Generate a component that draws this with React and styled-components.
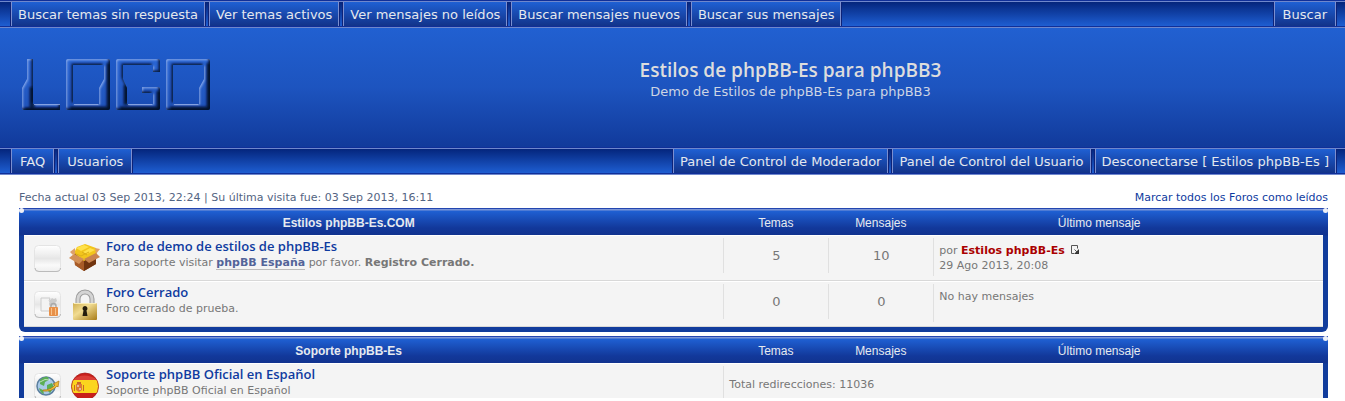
import styled, { createGlobalStyle } from 'styled-components';

const GlobalStyle = createGlobalStyle`
	* {
		box-sizing: border-box;
	}
	body {
		margin: 0;
		background: #fff;
		color: #777;
		font-family: "DejaVu Sans", Verdana, sans-serif;
		font-size: 11px;
		line-height: 15px;
	}
	a {
		color: #0f3ba0;
		text-decoration: none;
	}
`;

const SPage = styled.div`
	height: calc(100vh - 3px);
	overflow: hidden;
`;

const SBar = styled.nav`
	display: flex;
	justify-content: space-between;
	padding: 0 9px 0 11px;
	height: 28px;
	border-bottom: 1px solid #6f87cc;
	border-top: 1px solid #102f98;
	background: linear-gradient(#6f87cc 1px, #04257c 1px, #1e5ed2 25px, #102f98 25px);
`;

const SBarGroup = styled.div`
	display: flex;
	gap: 4px;
	padding: 1px 0;
`;

const SBarLink = styled.a`
	height: 24px;
	padding: 0 ${({ $tight }) => ($tight ? '6px' : '8px')};
	border: solid #7b8fd0;
	border-width: 0 1px;
	box-shadow: -1px 0 #0c2278, 1px 0 #0c2278;
	background: linear-gradient(#1f60d3, #12338a);
	color: #e4e8ee;
	font-size: 13px;
	line-height: 26px;
	white-space: nowrap;
`;

const SHeader = styled.header`
	display: flex;
	height: 119px;
	background: linear-gradient(#2160d1, #1d54bf 50%, #113a9b);
`;

const SLogo = styled.a`
	flex: 0 0 236px;
	padding: 29px 0 0 20px;
`;

const STitles = styled.div`
	flex: 1;
	padding-top: 29px;
	color: #cdd5e4;
	font-size: 13px;
	text-align: center;
`;

const STitle = styled.h1`
	margin: 0;
	color: #ddd;
	font: 600 19px/27px "Open Sans", sans-serif;
`;

const SSubtitle = styled.p`
	margin: 0;
	line-height: 16px;
`;

const SMain = styled.main`
	padding: 15px 17px 0 19px;
`;

const SInfo = styled.div`
	display: flex;
	justify-content: space-between;
	height: 18px;
	color: #536482;
`;

const SPanel = styled.section`
	position: relative;
	margin-bottom: 4px;
	padding: 0 5px 5px;
	border-radius: 0 0 6px 6px;
	background: linear-gradient(
		#2245b0 1px,
		#7d96d6 1px,
		#7d96d6 2px,
		#1f60d3 3px,
		#12389a 20px,
		#11338f 27px,
		#113c9c 28px
	);
`;

const SCorner = styled.span`
	position: absolute;
	top: 0;
	${({ $side }) => $side}: 0;
	width: 5px;
	height: 5px;
	border-radius: 50%;
	background: #eef0f6;
`;

const STable = styled.table`
	width: 100%;
	border-spacing: 0;
	table-layout: fixed;
`;

const STh = styled.th`
	width: ${({ $width }) => $width};
	height: 27px;
	padding: 3px ${({ $trail }) => $trail || '0'} 0 0;
	color: #e6eaf0;
	font: ${({ $bold }) => ($bold ? 700 : 400)} 12px/16px "Liberation Sans", Arial, sans-serif;
`;

const STd = styled.td`
	height: 46px;
	padding: 2px 0 0;
	border-top: 1px solid #fff;
	border-bottom: 1px solid #d8d8d8;
	background: #f4f4f4;
	vertical-align: top;
`;

const SForum = styled.div`
	display: flex;
	align-items: flex-start;
	padding: 0 0 0 10px;
`;

const SStatus = styled.svg`
	flex: none;
	margin: 7px 7px 0 0;
`;

const SForumIcon = styled.svg`
	flex: none;
	margin: 5px 6px 0 0;
`;

const SForumTitle = styled.a`
	display: block;
	padding-bottom: 1px;
	font: 600 13px/16px "Open Sans", sans-serif;
`;

const SInlineLink = styled.a`
	border-bottom: 1px solid #bbb;
	color: #536499;
	font-weight: bold;
`;

const SCount = styled.div`
	height: 35px;
	border-left: 1px solid #e0e0e0;
	font-size: 13px;
	line-height: 36px;
	text-align: center;
`;

const SLast = styled.div`
	min-height: 38px;
	padding: ${({ $redirect }) => ($redirect ? '11px 0 0 5px' : '5px 0 0 5px')};
	border-left: 1px solid #e0e0e0;
`;

const SAuthor = styled.a`
	color: #a00;
	font-weight: bold;
`;

const SLatest = styled.svg`
	margin-left: 3px;
	vertical-align: -1px;
`;

const LETTERS =
	'M5,0H11V45H38V51H2Q0,51 0,49V29L5,20Z' +
	'M46,0H86Q88,0 88,2V49Q88,51 86,51H46Q44,51 44,49V2Q44,0 46,0ZM51,6V45H77V29L82,20V6Z' +
	'M96,0H136Q138,0 138,2V13H131V6H101V20L105,29V45H131V34H120V28H136Q138,28 138,30V49Q138,51 136,51H96Q94,51 94,49V2Q94,0 96,0Z' +
	'M146,0H186Q188,0 188,2V49Q188,51 186,51H146Q144,51 144,49V2Q144,0 146,0ZM151,6V45H177V29L182,20V6Z';
const AROUND = `M-10,-10H200V62H-10Z${LETTERS}`;

const Logo = () => (
	<svg width="192" height="54" viewBox="-2 -2 192 54" role="img" aria-label="Logo">
		<defs>
			<clipPath id="letters">
				<path d={LETTERS} clipRule="evenodd" />
			</clipPath>
			<filter id="soft">
				<feGaussianBlur stdDeviation="1.200" />
			</filter>
			<linearGradient id="metal" x2="0" y2="1">
				<stop stopColor="#2a66d4" />
				<stop offset="1" stopColor="#1f52ba" />
			</linearGradient>
		</defs>
		<g clipPath="url(#letters)">
			<path d={LETTERS} fill="url(#metal)" fillRule="evenodd" />
			<g filter="url(#soft)" opacity=".8">
				<path d={AROUND} fill="#a4c0f8" fillRule="evenodd" transform="translate(1 1)" />
			</g>
			<g filter="url(#soft)" opacity=".85">
				<path d={AROUND} fill="#020a20" fillRule="evenodd" transform="translate(-1.500 -1.500)" />
			</g>
			<g filter="url(#soft)" opacity=".75">
				<path
					d="M10,28V50M38,51H3M87,4V50H48M137,32V50H98M104,26V46M187,4V50H148"
					fill="none"
					stroke="#020a20"
					strokeWidth="5"
				/>
			</g>
			<path d="M12,45.500H38M52,45.500H76M106,45.500H130M152,45.500H176" stroke="#8fa9e6" opacity=".8" />
		</g>
	</svg>
);

const StatusIcon = ({ type }) => (
	<SStatus width="28" height="28" viewBox="0 0 28 28" aria-hidden="true">
		<defs>
			<linearGradient id="tile" x2="0" y2="1">
				<stop stopColor="#fff" />
				<stop offset=".3" stopColor="#f1f1f1" />
				<stop offset=".5" stopColor="#e6e6e6" />
				<stop offset=".75" stopColor="#fafafa" />
				<stop offset="1" stopColor="#eee" />
			</linearGradient>
		</defs>
		<rect x=".5" y=".5" width="26" height="26" rx="4" fill="url(#tile)" stroke="#e4e4e4" />
		<path d="M1,23Q1,26.500 5,26.500H22Q26.500,26.500 26.500,23" fill="none" stroke="#bbb" />
		{type === 'locked' && (
			<>
				<path d="M7 7h9l-1 3 4 3v7H7z" fill="#f3f3f3" stroke="#ccc" />
				<path d="M16 9l2-2 2 1 2-1 1 3-2 2 1 3-3-1-3 2-1-3z" fill="#ccc" />
				<path d="M17 17v-2a2.500 2.500 0 0 1 5 0v2" fill="none" stroke="#aaa" strokeWidth="1.500" />
				<rect x="15" y="16" width="9" height="9" rx="1" fill="#e8914a" />
				<path d="M17.500 17v7M21.500 17v7" stroke="#f8c48c" />
			</>
		)}
		{type === 'link' && (
			<>
				<circle cx="12" cy="13" r="9" fill="#a9cbe8" stroke="#5b7f9f" strokeWidth="1.500" />
				<path d="M6 7q4-4 8-3l1 3-4 2-1 4-4-2zM13 12l5-2 2 4-4 6-3-3zM5 15l4 2 1 4q-4-1-5-6z" fill="#5bae54" />
				<path d="M6 9q5-4 10-2" stroke="#fff" fill="none" opacity=".6" />
				<path d="M9 17q8 0 12-5l-2-1 6-3-1 6-1-1q-5 6-14 5z" fill="#f0bc38" stroke="#a97517" strokeWidth=".7" />
			</>
		)}
	</SStatus>
);

const BoxIcon = () => (
	<SForumIcon width="31" height="30" viewBox="0 0 31 30" aria-hidden="true">
		<path d="M5 10L17 5l10 5v11L15 28 6 22z" fill="#8a471c" />
		<path d="M5 12l10 5v11L6 22z" fill="#a85b27" />
		<path d="M15 17l12-6v10l-12 7z" fill="#70340f" />
		<path d="M5 10L8 4l8-3 11 4 1 6-13 7z" fill="#f2c51c" />
		<path d="M7 5l8-3 5 2-8 4zM14 9l7-4 5 2-8 4z" fill="#ffe14a" />
		<path d="M5 10l7 3 8-4M13 9l5 3" stroke="#dcae18" fill="none" />
		<path d="M5 11l10 5-5 5L0 15z" fill="#d29058" />
		<path d="M15 16l12-6 4 4-11 6z" fill="#c98450" />
		<path d="M1 9l5-4v6l-2 1zM26 5l5 1-4 5z" fill="#dda06a" />
	</SForumIcon>
);

const PadlockIcon = () => (
	<SForumIcon width="31" height="34" viewBox="0 1 31 34" aria-hidden="true">
		<defs>
			<linearGradient id="brass" x2="1" y2="1">
				<stop stopColor="#cfae4f" />
				<stop offset=".4" stopColor="#f1dc92" />
				<stop offset="1" stopColor="#a87c18" />
			</linearGradient>
		</defs>
		<path d="M9 16V11a7 7 0 0 1 14 0v5" fill="none" stroke="#999" strokeWidth="5" />
		<path d="M9 16V11a7 7 0 0 1 14 0v5" fill="none" stroke="#d4d4d4" strokeWidth="3" />
		<rect x="4" y="15" width="24" height="17" rx="1" fill="url(#brass)" />
		<path d="M5 15.500h22" stroke="#faedb8" />
		<path d="M16 18a2.500 2.500 0 0 1 1.500 4.500l1 5.500h-5l1-5.500a2.500 2.500 0 0 1 1.500-4.500z" fill="#251d0d" />
	</SForumIcon>
);

const SpainIcon = () => (
	<SForumIcon width="31" height="30" viewBox="0 0 31 30" aria-hidden="true">
		<defs>
			<clipPath id="disc">
				<circle cx="16" cy="15.500" r="13.500" />
			</clipPath>
		</defs>
		<g clipPath="url(#disc)">
			<rect width="31" height="30" fill="#c8201c" />
			<rect y="9" width="31" height="13" fill="#fbd51e" />
			<path d="M3 9Q15 0 29 9z" fill="#e7534a" opacity=".6" />
			<path d="M7 13h6v6l-3 2-3-2z" fill="#dd7a35" />
			<path d="M8 11h4v2H8zM5 14h1v6H5zM14 14h1v6h-1z" fill="#c8642d" />
			<path d="M8 14h2v2H8zM10 17h2v2h-2z" fill="#e8b89a" />
		</g>
		<circle cx="16" cy="15.500" r="13.500" fill="none" stroke="#a31a17" strokeOpacity=".7" />
	</SForumIcon>
);

const BarLinks = ({ items, tight }) => (
	<SBarGroup>
		{items.map((item) => (
			<SBarLink key={item} href="#" $tight={tight}>
				{item}
			</SBarLink>
		))}
	</SBarGroup>
);

const Forum = ({ status, icon, title, children }) => (
	<SForum>
		<StatusIcon type={status} />
		{icon}
		<div>
			<SForumTitle href="#">{title}</SForumTitle>
			{children}
		</div>
	</SForum>
);

const Panel = ({ title, children }) => (
	<SPanel>
		<SCorner $side="left" />
		<SCorner $side="right" />
		<STable>
			<thead>
				<tr>
					<STh $bold $trail="50px">
						{title}
					</STh>
					<STh $width="105px">Temas</STh>
					<STh $width="105px">Mensajes</STh>
					<STh $width="30%" $trail="58px">
						Último mensaje
					</STh>
				</tr>
			</thead>
			<tbody>{children}</tbody>
		</STable>
	</SPanel>
);

const App = () => (
	<SPage>
		<GlobalStyle />
		<SBar>
			<BarLinks
				tight
				items={[
					'Buscar temas sin respuesta',
					'Ver temas activos',
					'Ver mensajes no leídos',
					'Buscar mensajes nuevos',
					'Buscar sus mensajes',
				]}
			/>
			<BarLinks items={['Buscar']} />
		</SBar>
		<SHeader>
			<SLogo href="#">
				<Logo />
			</SLogo>
			<STitles>
				<STitle>Estilos de phpBB-Es para phpBB3</STitle>
				<SSubtitle>Demo de Estilos de phpBB-Es para phpBB3</SSubtitle>
			</STitles>
		</SHeader>
		<SBar>
			<BarLinks items={['FAQ', 'Usuarios']} />
			<BarLinks
				tight
				items={[
					'Panel de Control de Moderador',
					'Panel de Control del Usuario',
					'Desconectarse [ Estilos phpBB-Es ]',
				]}
			/>
		</SBar>
		<SMain>
			<SInfo>
				<span>Fecha actual 03 Sep 2013, 22:24 | Su última visita fue: 03 Sep 2013, 16:11</span>
				<a href="#">Marcar todos los Foros como leídos</a>
			</SInfo>
			<Panel title="Estilos phpBB-Es.COM">
				<tr>
					<STd>
						<Forum icon={<BoxIcon />} title="Foro de demo de estilos de phpBB-Es">
							Para soporte visitar <SInlineLink href="#">phpBB España</SInlineLink> por favor.{' '}
							<b>Registro Cerrado.</b>
						</Forum>
					</STd>
					<STd>
						<SCount>5</SCount>
					</STd>
					<STd>
						<SCount>10</SCount>
					</STd>
					<STd>
						<SLast>
							por <SAuthor href="#">Estilos phpBB-Es</SAuthor>{' '}
							<SLatest width="9" height="10" viewBox="0 0 9 10" aria-hidden="true">
								<path d="M3 8.500H.5V.5h6v3" fill="none" stroke="#555" />
								<path d="M8 4v5H3z" fill="#333" />
								<path d="M3.500 4.500l3 3" stroke="#555" />
							</SLatest>
							<br />
							29 Ago 2013, 20:08
						</SLast>
					</STd>
				</tr>
				<tr>
					<STd>
						<Forum status="locked" icon={<PadlockIcon />} title="Foro Cerrado">
							Foro cerrado de prueba.
						</Forum>
					</STd>
					<STd>
						<SCount>0</SCount>
					</STd>
					<STd>
						<SCount>0</SCount>
					</STd>
					<STd>
						<SLast>No hay mensajes</SLast>
					</STd>
				</tr>
			</Panel>
			<Panel title="Soporte phpBB-Es">
				<tr>
					<STd>
						<Forum status="link" icon={<SpainIcon />} title="Soporte phpBB Oficial en Español">
							Soporte phpBB Oficial en Español
						</Forum>
					</STd>
					<STd colSpan={3}>
						<SLast $redirect>Total redirecciones: 11036</SLast>
					</STd>
				</tr>
			</Panel>
		</SMain>
	</SPage>
);

export default App;
